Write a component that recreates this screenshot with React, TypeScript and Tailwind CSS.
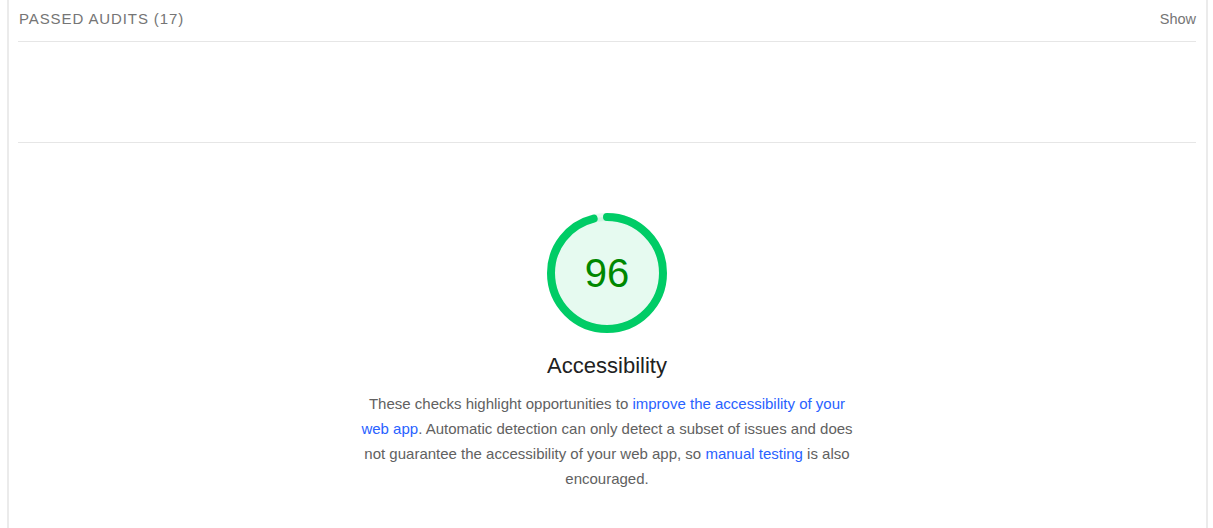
import React from "react";

// Jauge circulaire du score (style Lighthouse)
function ScoreGauge({ score }: { score: number }) {
    const r = 56;
    const circ = 2 * Math.PI * r;
    return (
        <div className="relative w-[120px] h-[120px]">
            <svg viewBox="0 0 120 120" className="w-[120px] h-[120px]">
                <circle cx="60" cy="60" r={r} fill="#e6faf0" stroke="#00cc66" strokeOpacity="0.1" strokeWidth="8" />
                <circle
                    cx="60"
                    cy="60"
                    r={r}
                    fill="none"
                    stroke="#00cc66"
                    strokeWidth="8"
                    strokeLinecap="round"
                    transform="rotate(-90 60 60)"
                    style={{ strokeDasharray: `${(score / 100) * circ} ${circ}` }}
                />
            </svg>
            <div className="absolute inset-0 flex items-center justify-center text-[40px] text-[#008800] leading-none">
                {score}
            </div>
        </div>
    );
}

export default function App() {
    return (
        <div className="w-[1213px] h-[528px] overflow-hidden bg-white pl-[7px] pr-[5px] font-['Liberation_Sans',Arial,sans-serif]">
            <div className="h-full border-x-2 border-[#ebebeb] pl-[9px] pr-[10px]">
                {/* Audits réussis */}
                <div className="flex items-baseline justify-between h-[42px] border-b border-[#e6e6e6] pt-[10px]">
                    <span className="text-[15px] leading-[18px] tracking-[0.9px] text-[#757575] pl-px">PASSED AUDITS (17)</span>
                    <span className="text-[14.5px] leading-[18px] text-[#757575]">Show</span>
                </div>
                <div className="h-[101px] border-b border-[#e6e6e6]"></div>

                {/* En-tête de catégorie */}
                <div className="flex flex-col items-center pt-[70px]">
                    <ScoreGauge score={96} />
                    <h2 className="mt-[20px] text-[22px] leading-[26px] text-[#212121]">Accessibility</h2>
                    <p className="mt-[12px] w-[500px] text-center text-[15px] leading-[25px] text-[#616161]">
                        These checks highlight opportunities to{" "}
                        <a className="text-[#2962ff]">improve the accessibility of your web app</a>. Automatic
                        detection can only detect a subset of issues and does not guarantee the accessibility of
                        your web app, so <a className="text-[#2962ff]">manual testing</a> is also encouraged.
                    </p>
                </div>
            </div>
        </div>
    );
}
